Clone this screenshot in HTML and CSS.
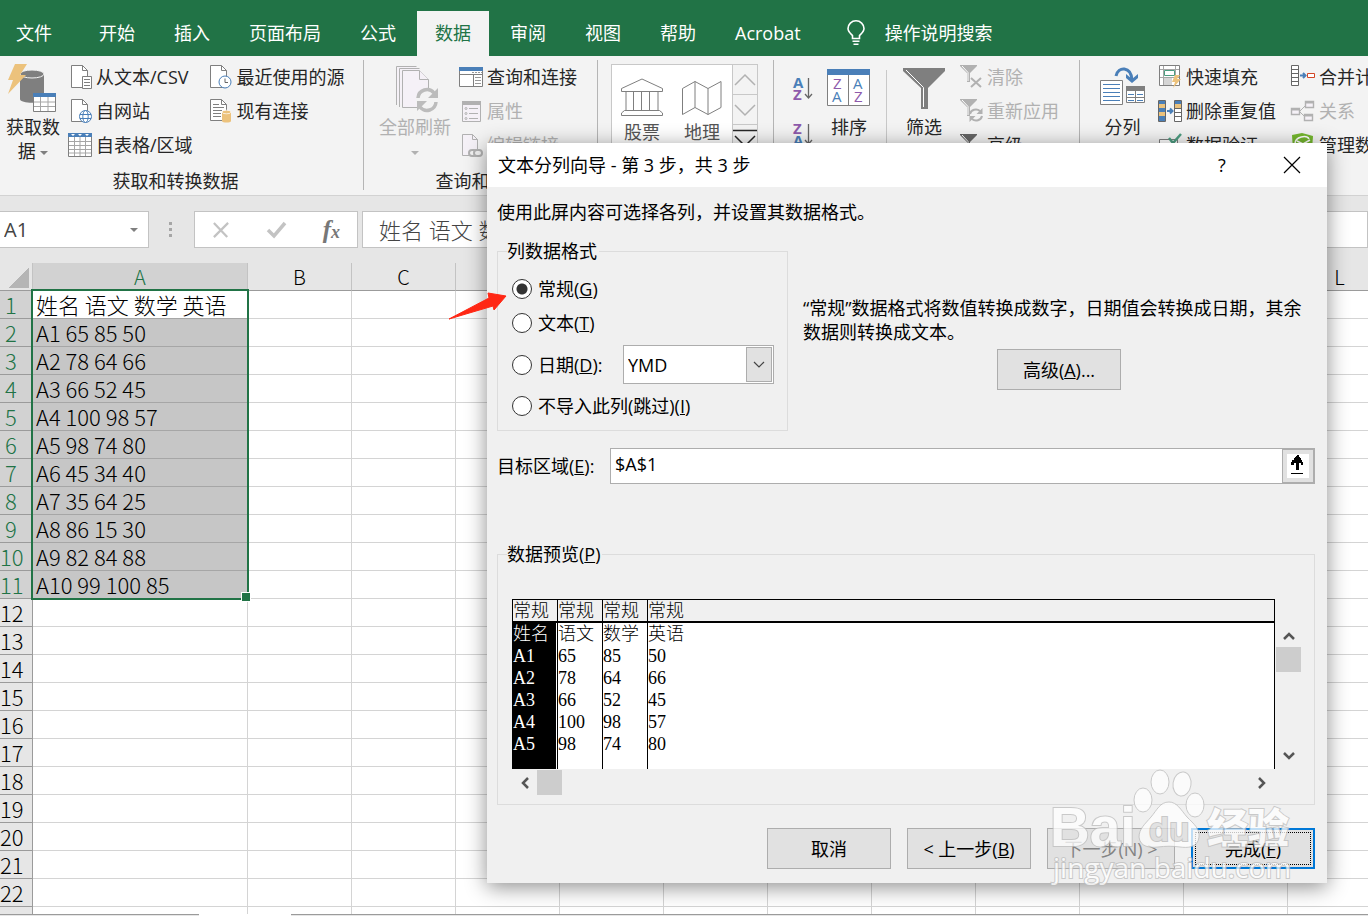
FILE: index.html
```html
<!DOCTYPE html>
<html lang="zh-CN">

<head>
    <meta charset="UTF-8">
    <meta name="viewport" content="width=device-width, initial-scale=1.0">
    <title>文本分列向导</title>
    <link rel="stylesheet" href="styles.css">
</head>

<body>
    <nav class="tabs">
        <a class="tab tab-file" href="#">文件</a>
        <a class="tab" href="#">开始</a>
        <a class="tab" href="#">插入</a>
        <a class="tab" href="#">页面布局</a>
        <a class="tab" href="#">公式</a>
        <a class="tab tab-active" href="#">数据</a>
        <a class="tab" href="#">审阅</a>
        <a class="tab" href="#">视图</a>
        <a class="tab" href="#">帮助</a>
        <a class="tab" href="#">Acrobat</a>
        <a class="tab tab-search" href="#">
            <svg width="18" height="26" viewBox="0 0 18 26" fill="none" stroke="#fff" stroke-width="1.6">
                <path d="M5.5 18.5v-3C3 13 1 11.500 1 8.500a8 7.700 0 0 1 16 0c0 3-2 4.500-4.500 7v3z" />
                <path d="M5.500 21.200h7M6.500 24.200h5" />
            </svg>
            操作说明搜索
        </a>
    </nav>

    <div class="ribbon">
        <section class="group group-get">
            <div class="group-body">
                <button class="big big-get">
                    <svg width="50" height="50" viewBox="0 0 50 50">
                        <path d="M12 10v25c0 5 24 5 24 0V10z" fill="#7f7f7f" />
                        <ellipse cx="24" cy="10" rx="12" ry="4" fill="#7f7f7f" stroke="#f3f3f3" />
                        <path d="M7 0h12l-7 11h6L0 30l5-14H0z" fill="#ecc27c" />
                        <path d="M25.500 29.500h22v18h-22z" fill="#fff" stroke="#7f7f7f" />
                        <path d="M25 29h23v4H25z" fill="#4a7fb8" />
                        <path d="M26 38h21M26 42.500h21M32.500 33v14M40 33v14" stroke="#a6a6a6" />
                    </svg>
                    <span>获取数<br>据 <i class="caret"></i></span>
                </button>
                <div class="column">
                    <button class="small">
                        <svg class="icon" viewBox="0 0 24 24">
                            <path d="M3.500.500h11l5 5v17h-16z" fill="#fff" stroke="#7f7f7f" />
                            <path d="M14.500.500v5h5" fill="none" stroke="#7f7f7f" />
                            <path d="M14.500 11.500h9v12h-9z" fill="#fff" stroke="#7f7f7f" />
                            <path d="M16 14.500h6M16 17.500h6M16 20.500h6" stroke="#7f7f7f" />
                        </svg>从文本/CSV
                    </button>
                    <button class="small">
                        <svg class="icon" viewBox="0 0 24 24">
                            <path d="M3.500.500h11l5 5v17h-16z" fill="#fff" stroke="#7f7f7f" />
                            <path d="M14.500.500v5h5" fill="none" stroke="#7f7f7f" />
                            <g fill="#fff" stroke="#4a7fb8">
                                <circle cx="17.500" cy="17.500" r="6" />
                                <ellipse cx="17.500" cy="17.500" rx="2.700" ry="6" />
                                <path d="M12 15.500h11M12 19.500h11" />
                            </g>
                        </svg>自网站
                    </button>
                    <button class="small">
                        <svg class="icon" viewBox="0 0 24 24">
                            <path d="M.500.500h23v23H.500z" fill="#fff" stroke="#7f7f7f" />
                            <path d="M0 0h24v4H0z" fill="#4a7fb8" />
                            <path d="M1 8.500h22M1 12.500h22M1 16.500h22M1 20h22M6.500 4v19M12 4v19M17.500 4v19" stroke="#a6a6a6" />
                            <path d="M3 1h4L5 3zM10 1h4l-2 2zM17 1h4l-2 2z" fill="#fff" />
                        </svg>自表格/区域
                    </button>
                </div>
                <div class="column">
                    <button class="small">
                        <svg class="icon" viewBox="0 0 24 24">
                            <path d="M1.500.500h11l5 5v17h-16z" fill="#fff" stroke="#7f7f7f" />
                            <path d="M12.500.500v5h5" fill="none" stroke="#7f7f7f" />
                            <circle cx="16" cy="17" r="6" fill="#fff" stroke="#4a7fb8" />
                            <path d="M16 13.500V17.500h3" fill="none" stroke="#666" />
                        </svg>最近使用的源
                    </button>
                    <button class="small">
                        <svg class="icon" viewBox="0 0 24 24">
                            <path d="M1.500.500h11l5 5v16h-16z" fill="#fff" stroke="#7f7f7f" />
                            <path d="M12.500.500v5h5M4 5.500h6M4 8.500h11M4 11.500h9M4 14.500h8M4 17.500h8" fill="none" stroke="#7f7f7f" />
                            <path d="M13 13v9c0 2 9 2 9 0v-9z" fill="#ecc27c" />
                            <ellipse cx="17.500" cy="13" rx="4.500" ry="1.800" fill="#ecc27c" stroke="#fff" stroke-width=".7" />
                        </svg>现有连接
                    </button>
                </div>
            </div>
            <div class="group-label">获取和转换数据</div>
        </section>

        <section class="group group-query">
            <div class="group-body">
                <button class="big big-refresh" disabled>
                    <svg width="46" height="50" viewBox="0 0 46 50">
                        <g fill="#f5f1f7" stroke="#b1b1b1">
                            <path d="M4.500 41V2.500h20M7.500 43V4.500h20" />
                            <path d="M10.500 6.500h17l9 9v28h-26z" />
                            <path d="M27.500 6.500v9h9" />
                        </g>
                        <circle cx="35" cy="36" r="11" fill="#f3f3f3" />
                        <path d="M26 34a9 9 0 0 1 16-5M44 38a9 9 0 0 1-16 5" fill="none" stroke="#bcbcbc" stroke-width="3.500" />
                        <path d="M46 24v10H36zM25 47V37h10z" fill="#bcbcbc" />
                    </svg>
                    <span>全部刷新<br><i class="caret"></i></span>
                </button>
                <div class="column">
                    <button class="small">
                        <svg class="icon" viewBox="0 0 24 24">
                            <path d="M.500 2.500h23v19H.500z" fill="#fff" stroke="#7f7f7f" />
                            <path d="M0 2h24v4H0z" fill="#4a7fb8" />
                            <path d="M1 9.500h22M14.500 9v12" stroke="#7f7f7f" />
                            <path d="M16 12.500h6M16 15.500h6M16 18.500h6" stroke="#999" />
                            <path d="M13 7.500h10" stroke="#999" stroke-dasharray="2 1" />
                        </svg>查询和连接
                    </button>
                    <button class="small" disabled>
                        <svg class="icon" viewBox="0 0 24 24">
                            <path d="M3.500 2.500h18v20h-18z" fill="#f5f1f7" stroke="#b1b1b1" />
                            <path d="M3 2h19v4H3z" fill="#b1b1b1" />
                            <path d="M10 9.500h9M10 14.500h9M10 19.500h9" stroke="#b1b1b1" />
                            <g fill="none" stroke="#b1b1b1"><circle cx="7" cy="9.500" r="1" /><circle cx="7" cy="14.500" r="1" /><circle cx="7" cy="19.500" r="1" /></g>
                        </svg>属性
                    </button>
                    <button class="small" disabled>
                        <svg class="icon" viewBox="0 0 24 24">
                            <path d="M3.500 1.500h10l5 5v16h-15z" fill="#f5f1f7" stroke="#b1b1b1" />
                            <path d="M13.500 1.500v5h5" fill="none" stroke="#b1b1b1" />
                            <g fill="#f3f3f3" stroke="#b1b1b1" stroke-width="2"><rect x="10" y="17" width="8" height="6" rx="3" /><rect x="15" y="17" width="8" height="6" rx="3" /></g>
                        </svg>编辑链接
                    </button>
                </div>
            </div>
            <div class="group-label">查询和连接</div>
        </section>

        <section class="group group-types">
            <div class="gallery">
                <button class="gallery-item">
                    <svg width="42" height="38" viewBox="0 0 42 38" fill="none" stroke="#7f7f7f">
                        <path d="M.500 10.500 21 1l20.500 9.500v3H.500zM5 14v18M12.500 14v18M20.500 14v18M28.500 14v18M37 14v18M3.500 32.500h35l3 2.500v2.500H.500V35z" />
                    </svg>股票
                </button>
                <button class="gallery-item">
                    <svg width="42" height="38" viewBox="0 0 42 38" fill="none" stroke="#7f7f7f">
                        <path d="M1.500 10.500 14 3.500l13 7 13-7v26l-13 7-13-7-12.500 7zM14 3.500v26M27 10.500v26" />
                    </svg>地理
                </button>
                <div class="gallery-scroll">
                    <button aria-label="上一行"><svg width="22" height="12" viewBox="0 0 22 12"><path d="M1 11 11 1l10 10" /></svg></button>
                    <button aria-label="下一行"><svg width="22" height="12" viewBox="0 0 22 12"><path d="m1 1 10 10L21 1" /></svg></button>
                    <button class="more" aria-label="其他"><svg width="24" height="18" viewBox="0 0 24 18"><path d="M0 1.500h24M2 7l10 10L22 7" /></svg></button>
                </div>
            </div>
        </section>

        <section class="group group-sort">
            <div class="sort-pair">
                <button aria-label="升序">
                    <svg width="20" height="26" viewBox="0 0 20 26">
                        <text class="az az-blue" x="0" y="12">A</text><text class="az az-purple" x="0" y="24">Z</text>
                        <path d="M15.500 2v19M12 18l3.500 4 3.500-4" fill="none" stroke="#666" stroke-width="1.300" />
                    </svg>
                </button>
                <button aria-label="降序">
                    <svg width="20" height="26" viewBox="0 0 20 26">
                        <text class="az az-purple" x="0" y="12">Z</text><text class="az az-blue" x="0" y="24">A</text>
                        <path d="M15.500 2v19M12 18l3.500 4 3.500-4" fill="none" stroke="#666" stroke-width="1.300" />
                    </svg>
                </button>
            </div>
            <button class="big big-sort">
                <svg width="44" height="50" viewBox="0 0 44 50">
                    <path d="M.500 5.500h42v36H.500z" fill="#fff" stroke="#7f7f7f" />
                    <path d="M0 5h43v6H0z" fill="#4a7fb8" />
                    <path d="M21.500 11v30" stroke="#7f7f7f" />
                    <text class="zz az-purple" x="6" y="25">Z</text><text class="zz az-blue" x="5" y="38">A</text>
                    <text class="zz az-blue" x="26" y="25">A</text><text class="zz az-purple" x="27" y="38">Z</text>
                </svg>
                <span>排序</span>
            </button>
            <div class="divider"></div>
            <button class="big big-filter">
                <svg width="42" height="50" viewBox="0 0 42 50">
                    <path d="M0 4h42v3L25 24v21h-7V24L0 7z" fill="#7f7f7f" />
                    <path d="m3 6 17.500 17.500V43" fill="none" stroke="#fff" />
                </svg>
                <span>筛选</span>
            </button>
            <div class="column">
                <button class="small" disabled>
                    <svg class="icon" viewBox="0 0 24 24">
                        <path d="M1 0h17v1l-7 7v9H8V8L1 1z" fill="#b1b1b1" /><path d="m3 1 6 6.500V16" fill="none" stroke="#fff" />
                        <path d="m12 13 10 9M22 13l-10 9" stroke="#b1b1b1" stroke-width="2" />
                    </svg>清除
                </button>
                <button class="small" disabled>
                    <svg class="icon" viewBox="0 0 24 24">
                        <path d="M1 0h17v1l-7 7v9H8V8L1 1z" fill="#b1b1b1" /><path d="m3 1 6 6.500V16" fill="none" stroke="#fff" />
                        <path d="M11 15a6 5.500 0 0 1 10-3M23 17a6 5.500 0 0 1-10 3" fill="none" stroke="#b1b1b1" stroke-width="2" />
                        <path d="M23.500 9v6h-6zM10.500 23v-6h6z" fill="#b1b1b1" />
                    </svg>重新应用
                </button>
                <button class="small">
                    <svg class="icon" viewBox="0 0 24 24">
                        <path d="M1 1h17v1l-7 7v9H8V9L1 2z" fill="#666" /><path d="m3 2 6 6.500V17" fill="none" stroke="#fff" />
                    </svg>高级
                </button>
            </div>
        </section>

        <section class="group group-tools">
            <button class="big big-split">
                <svg width="46" height="50" viewBox="0 0 46 50">
                    <path d="M.500 16.500h22v24H.500z" fill="#fff" stroke="#7f7f7f" />
                    <path d="M3 20.500h17M3 24.500h17M3 28.500h17M3 32.500h17M3 36.500h17" stroke="#4a7fb8" />
                    <path d="M26.500 22.500h18v16h-18z" fill="#fff" stroke="#7f7f7f" />
                    <path d="M26 22h19v5H26z" fill="#7f7f7f" />
                    <path d="M35.500 27v11M27 33.500h18" stroke="#7f7f7f" />
                    <path d="M28 30.500h6M37 30.500h6M28 36.500h6M37 36.500h6" stroke="#4a7fb8" />
                    <path d="M16 12c2-10 15-10 16 4" fill="none" stroke="#4a7fb8" stroke-width="3" />
                    <path d="M26 10v4l6 5 6-5v-4l-6 5z" fill="#4a7fb8" />
                </svg>
                <span>分列</span>
            </button>
            <div class="column column-tools">
                <button class="small">
                    <svg class="icon" viewBox="0 0 24 24">
                        <path d="M1.500.500h20v20h-20z" fill="#fff" stroke="#7f7f7f" />
                        <path d="M2 4.500h19M2 12.500h19M5.500 1v19M17.500 1v19" stroke="#a6a6a6" />
                        <path d="M6.500 5.500h10v5h-10z" fill="#fff" stroke="#4d9c80" />
                        <path d="M6 13h8v7H6z" fill="#d5d5d5" />
                        <path d="M17 10h5l-3 4h4l-8 9 2-6h-3z" fill="#ecc27c" />
                    </svg>快速填充
                </button>
                <button class="small">
                    <svg class="icon" viewBox="0 0 24 24">
                        <path d="M.500 1.500h7v21h-7zM16.500 1.500h7v21h-7z" fill="#fff" stroke="#666" />
                        <path d="M1 2h6v3H1zM1 9h6v4H1zM1 17h6v5H1zM17 2h6v3h-6z" fill="#4a7fb8" />
                        <path d="M1 5h6v4H1zM1 13h6v4H1zM17 5h6v4h-6z" fill="#ecc27c" />
                        <path d="M17 9.500h6M17 13.500h6M17 17.500h6" stroke="#666" />
                        <path d="M9 12h5M12 9.500l2.500 2.500-2.500 2.500" fill="none" stroke="#4a7fb8" stroke-width="2" />
                    </svg>删除重复值
                </button>
                <button class="small">
                    <svg class="icon" viewBox="0 0 24 24">
                        <path d="M1.500 6.500h18v6h-18z" fill="#fff" stroke="#7f7f7f" />
                        <path d="m11 5 4 5 8-9" fill="none" stroke="#4d9c80" stroke-width="2.500" />
                    </svg>数据验证
                </button>
            </div>
            <div class="column">
                <button class="small">
                    <svg class="icon" viewBox="0 0 24 24">
                        <path d="M.500.500h7v20h-7z" fill="#fff" stroke="#666" />
                        <path d="M1 4.500h6M1 8.500h6M1 12.500h6M1 16.500h6" stroke="#666" />
                        <path d="M9 10.500h5M12 8l2.500 2.500L12 13" fill="none" stroke="#4a7fb8" stroke-width="2" />
                        <path d="M16.500 8.500h7v4h-7z" fill="#fff" stroke="#d24726" />
                    </svg>合并计算
                </button>
                <button class="small" disabled>
                    <svg class="icon" viewBox="0 0 24 24">
                        <path d="M9 12 15 6M9 13l5 5" stroke="#b1b1b1" />
                        <path d="M.500 9.500h8v6h-8zM14.500 2.500h8v6h-8zM13.500 15.500h8v6h-8z" fill="#f5f1f7" stroke="#b1b1b1" stroke-width="1.400" />
                        <path d="M1 10.500h7M15 3.500h7M14 16.500h7" stroke="#b1b1b1" stroke-width="2" />
                    </svg>关系
                </button>
                <button class="small">
                    <svg class="icon" viewBox="0 0 24 24">
                        <path d="M1 2 11 0l11 3-1 14-9 5-10-5z" fill="#74b72e" />
                        <path d="M4 11c0-8 12-9 14-5M6 8l6 3 7-4M12 11v8" fill="none" stroke="#fff" stroke-width="1.500" />
                    </svg>管理数据模型
                </button>
            </div>
        </section>
    </div>

    <div class="formula-bar">
        <div class="name-box">
            <input type="text" value="A1" aria-label="名称框">
            <i class="caret"></i>
        </div>
        <div class="dots"><i></i><i></i><i></i></div>
        <div class="formula-buttons">
            <button aria-label="取消"><svg width="18" height="16" viewBox="0 0 20 18" stroke="#c3c3c3" stroke-width="2.500"><path d="m2 1 15 16M18 1 2 17" /></svg></button>
            <button aria-label="输入"><svg width="20" height="18" viewBox="0 0 20 18" fill="none" stroke="#c3c3c3" stroke-width="3.500"><path d="m2 9 6 6L19 2" /></svg></button>
            <button class="fx" aria-label="插入函数">f<small>x</small></button>
        </div>
        <input class="formula" type="text" value="姓名 语文 数学 英语" aria-label="编辑栏">
    </div>

    <main class="sheet">
        <table class="grid">
            <thead><tr id="columns"></tr></thead>
            <tbody id="rows"></tbody>
        </table>
        <div class="selection"></div>
    </main>
    <footer class="sheet-tabs"><span class="sheet-tab"></span></footer>

    <div class="dialog" role="dialog" aria-labelledby="dialog-title">
        <div class="dialog-title">
            <span id="dialog-title">文本分列向导 - 第 3 步，共 3 步</span>
            <button aria-label="帮助">?</button>
            <button aria-label="关闭"><svg width="16" height="16" viewBox="0 0 16 16" stroke="#000" stroke-width="1.200"><path d="m0 0 16 16M16 0 0 16" /></svg></button>
        </div>
        <form class="dialog-body">
            <p class="intro">使用此屏内容可选择各列，并设置其数据格式。</p>

            <div class="format-row">
                <fieldset class="format">
                    <legend>列数据格式</legend>
                    <label class="choice"><input type="radio" name="format" checked>常规(<u>G</u>)</label>
                    <label class="choice"><input type="radio" name="format">文本(<u>T</u>)</label>
                    <div class="choice-date">
                        <label class="choice"><input type="radio" name="format">日期(<u>D</u>):</label>
                        <div class="select">
                            <select aria-label="日期格式"><option>YMD</option></select>
                            <span class="select-arrow"><svg width="12" height="7" viewBox="0 0 12 7" fill="none" stroke="#444" stroke-width="1.200"><path d="m1 1 5 5 5-5" /></svg></span>
                        </div>
                    </div>
                    <label class="choice"><input type="radio" name="format">不导入此列(跳过)(<u>I</u>)</label>
                </fieldset>
                <div class="hint">
                    <p>“常规”数据格式将数值转换成数字，日期值会转换成日期，其余数据则转换成文本。</p>
                    <button type="button" class="btn">高级(<u>A</u>)...</button>
                </div>
            </div>

            <div class="target">
                <label for="target">目标区域(<u>E</u>):</label>
                <input type="text" id="target" value="$A$1">
                <button type="button" aria-label="选择区域">
                    <svg width="22" height="24" viewBox="0 0 22 24"><path d="M0 0h22v24H0z" fill="#fff" /><path d="M11 1h-1v1H9v1H8v1H7v2H5v2H4v3h3V9h2v7h3V9h2v2h2V8h-1V6h-1V4h-1V3h-1V1zM4 19h12v1H4z" /></svg>
                </button>
            </div>

            <fieldset class="preview">
                <legend>数据预览(<u>P</u>)</legend>
                <div class="preview-area">
                    <div class="preview-box">
                        <table class="preview-table">
                            <thead>
                                <tr><th>常规</th><th>常规</th><th>常规</th><th>常规</th></tr>
                            </thead>
                            <tbody>
                                <tr><td>姓名</td><td>语文</td><td>数学</td><td>英语</td></tr>
                                <tr><td>A1</td><td>65</td><td>85</td><td>50</td></tr>
                                <tr><td>A2</td><td>78</td><td>64</td><td>66</td></tr>
                                <tr><td>A3</td><td>66</td><td>52</td><td>45</td></tr>
                                <tr><td>A4</td><td>100</td><td>98</td><td>57</td></tr>
                                <tr><td>A5</td><td>98</td><td>74</td><td>80</td></tr>
                                <tr><td></td><td></td><td></td><td></td></tr>
                            </tbody>
                        </table>
                    </div>
                    <div class="scroll scroll-v">
                        <svg width="12" height="10" viewBox="0 0 12 10"><path d="m1 8 5-5 5 5" /></svg>
                        <span class="thumb"></span>
                        <svg class="scroll-end" width="12" height="10" viewBox="0 0 12 10"><path d="m1 2 5 5 5-5" /></svg>
                    </div>
                    <div class="scroll scroll-h">
                        <svg width="10" height="12" viewBox="0 0 10 12"><path d="M8 1 3 6l5 5" /></svg>
                        <span class="thumb"></span>
                        <svg class="scroll-end" width="10" height="12" viewBox="0 0 10 12"><path d="m2 1 5 5-5 5" /></svg>
                    </div>
                </div>
            </fieldset>

            <div class="actions">
                <button type="button" class="btn">取消</button>
                <button type="button" class="btn">&lt; 上一步(<u>B</u>)</button>
                <button type="button" class="btn btn-next" disabled>下一步(N) &gt;</button>
                <button type="button" class="btn btn-finish"><span>完成(<u>F</u>)</span></button>
            </div>
        </form>
    </div>

    <svg class="arrow" width="60" height="34" viewBox="0 0 60 34"><path d="M1 30 41 9l-1-5 18 3-12 14-1-4z" fill="#ff2714" stroke="#ff2714" stroke-linejoin="round" /></svg>

    <svg class="watermark" width="250" height="124" viewBox="0 0 250 124">
        <g class="paw">
            <ellipse cx="93" cy="33" rx="9" ry="12" />
            <ellipse cx="110" cy="15" rx="9" ry="12" />
            <ellipse cx="132" cy="17" rx="9" ry="12" transform="rotate(8 132 17)" />
            <ellipse cx="145" cy="38" rx="9" ry="12" />
            <path d="M119 35c8 0 12 8 18 15 7 7 13 12 12 20-1 11-12 11-19 10-8-1-14-1-22 0-8 1-18 0-19-10 0-8 6-13 12-20 6-7 9-15 18-15z" />
        </g>
        <text class="wm-bai" x="0" y="79">Bai</text>
        <text class="wm-du" x="99" y="74">du</text>
        <text class="wm-cn" x="157" y="76">经验</text>
        <text class="wm-url" x="3" y="111">jingyan.baidu.com</text>
    </svg>

    <script>
        const columns = ['A', 'B', 'C', 'D', 'E', 'F', 'G', 'H', 'I', 'J', 'K', 'L'];
        const data = [
            '姓名 语文 数学 英语', 'A1 65 85 50', 'A2 78 64 66', 'A3 66 52 45', 'A4 100 98 57', 'A5 98 74 80',
            'A6 45 34 40', 'A7 35 64 25', 'A8 86 15 30', 'A9 82 84 88', 'A10 99 100 85'
        ];

        document.querySelector('#columns').innerHTML = '<th class="corner"></th>' +
            columns.map((c) => `<th class="${c === 'A' ? 'col-a' : ''}">${c}</th>`).join('');

        let html = '';
        for (let i = 0; i < 23; i++) {
            html += `<tr class="${i < data.length ? 'selected' : ''}"><th>${i + 1}</th>`;
            html += columns.map((c, j) => `<td>${j === 0 && data[i] ? data[i] : ''}</td>`).join('') + '</tr>';
        }
        document.querySelector('#rows').innerHTML = html;
    </script>
</body>

</html>
```
FILE: styles.css
```css
* {
    box-sizing: border-box;
}

body {
    display: flex;
    flex-direction: column;
    height: 100vh;
    margin: 0;
    overflow: hidden;
    background-color: #e6e6e6;
    color: #262626;
    font: 18px/24px "Open Sans", "Noto Sans CJK SC", sans-serif;
}

button,
input,
select {
    margin: 0;
    padding: 0;
    border: 0;
    background: none;
    color: inherit;
    font: inherit;
}

svg {
    display: block;
    flex: none;
    overflow: visible;
}

/* tabs */
.tabs {
    display: flex;
    flex: none;
    gap: 3px;
    height: 56px;
    padding-top: 11px;
    background-color: #217346;
    white-space: nowrap;
}

.tab {
    display: flex;
    align-items: center;
    padding: 0 18px 2px;
    color: #fff;
    text-decoration: none;
}

.tab-file {
    padding: 0 26px 2px 16px;
}

.tab-active {
    background-color: #f3f3f3;
    color: #217346;
}

.tab-search {
    gap: 20px;
    padding-left: 25px;
}

/* ribbon */
.ribbon {
    display: flex;
    flex: none;
    height: 140px;
    padding: 4px 0 5px;
    overflow: hidden;
    background-color: #f3f3f3;
    border-bottom: 1px solid #d2d2d2;
    white-space: nowrap;
}

.group {
    flex: none;
    border-right: 1px solid #b5b5b5;
}

.group-get {
    width: 364px;
}

.group-query {
    width: 234px;
}

.group-types {
    width: 176px;
    padding: 4px 0 0 13px;
}

.group-sort,
.group-tools {
    display: flex;
}

.group-sort {
    width: 306px;
}

.group-tools {
    border-right: 0;
}

.group-body {
    display: flex;
    height: 109px;
}

.group-label {
    margin-right: 12px;
    text-align: center;
}

.group-query .group-label {
    margin-right: 0;
}

.column {
    display: flex;
    flex-direction: column;
}

.column + .column {
    margin-left: 16px;
}

.small {
    display: flex;
    align-items: center;
    gap: 4px;
    height: 34px;
}

.icon {
    width: 24px;
    height: 24px;
}

.big {
    display: flex;
    flex: none;
    flex-direction: column;
    align-items: center;
    gap: 1px;
    width: 64px;
    height: 108px;
    padding-top: 4px;
}

.big > span {
    line-height: 24px;
}

button:disabled {
    color: #b1b1b1;
}

.big-get {
    margin: 0 3px 0 1px;
}

.big-refresh {
    width: 82px;
    margin: 0 3px 0 10px;
}

.caret {
    display: inline-block;
    border: 4px solid transparent;
    border-top-color: #7f7f7f;
    border-bottom: 0;
    vertical-align: middle;
}

.big-refresh .caret {
    border-top-color: #b1b1b1;
}

.gallery {
    display: flex;
    width: 147px;
    height: 110px;
    background-color: #fff;
    border: 1px solid #c8c8c8;
    color: #555;
}

.gallery-item {
    display: flex;
    flex: 1;
    flex-direction: column;
    align-items: center;
    gap: 4px;
    padding-top: 13px;
}

.gallery-scroll {
    display: flex;
    flex-direction: column;
    width: 25px;
    background-color: #f3f3f3;
    border-left: 1px solid #c8c8c8;
}

.gallery-scroll button {
    display: flex;
    align-items: center;
    justify-content: center;
    height: 30px;
    border-bottom: 1px solid #c8c8c8;
}

.gallery-scroll .more {
    align-items: flex-start;
    padding-top: 4px;
}

.gallery-scroll path {
    fill: none;
    stroke: #b1b1b1;
    stroke-width: 1.5;
}

.gallery-scroll .more path {
    stroke: #262626;
}

.sort-pair {
    display: flex;
    flex-direction: column;
    gap: 20px;
    width: 42px;
    padding: 16px 0 0 19px;
}

.az {
    font: bold 15px "Open Sans", sans-serif;
}

.zz {
    font: 15px "Open Sans", sans-serif;
}

.az-blue {
    fill: #4a7fb8;
}

.az-purple {
    fill: #8e5aab;
}

.big-sort {
    margin-left: 1px;
}

.divider {
    width: 1px;
    margin: 10px 5px 0;
    background-color: #c8c8c8;
}

.big-filter {
    margin-right: 3px;
}

.big-split {
    width: 78px;
    padding-left: 7px;
}

.column-tools {
    width: 117px;
}

/* formula bar */
.formula-bar {
    display: flex;
    flex: none;
    height: 67px;
    padding: 15px 0;
}

.name-box,
.formula-buttons,
.formula {
    display: flex;
    align-items: center;
    background-color: #fff;
    border: 1px solid #c3c3c3;
    color: #444;
}

.name-box {
    width: 149px;
    padding: 0 10px 0 4px;
    border-left: 0;
    font-size: 20px;
}

.name-box input {
    flex: 1;
    min-width: 0;
}

.dots {
    display: flex;
    flex-direction: column;
    align-items: center;
    justify-content: center;
    gap: 3px;
    width: 43px;
    margin-right: 2px;
}

.dots i {
    width: 3px;
    height: 3px;
    background-color: #a6a6a6;
}

.formula-buttons {
    justify-content: space-between;
    width: 164px;
    margin-right: 4px;
    padding: 0 17px;
}

.fx {
    color: #777;
    font: italic bold 25px "Liberation Serif", serif;
}

.fx small {
    font-size: 18px;
}

.formula {
    flex: 1;
    min-width: 0;
    padding-left: 16px;
    font-size: 22px;
    font-weight: 300;
}

/* grid */
.sheet {
    position: relative;
    flex: 1;
    min-height: 0;
    overflow: hidden;
    background-color: #fff;
    font: 300 22px/27px "Noto Sans CJK SC", sans-serif;
    color: #000;
}

.grid {
    width: 1392px;
    table-layout: fixed;
    border-spacing: 0;
}

.grid th,
.grid td {
    height: 28px;
    padding: 0;
    border-right: 1px solid #d4d4d4;
    border-bottom: 1px solid #d4d4d4;
    white-space: nowrap;
}

.grid th {
    background-color: #e6e6e6;
    border-color: #9b9b9b;
    font-weight: 300;
}

.grid thead th {
    border-right-color: #c3c3c3;
    font-size: 20px;
}

.grid .corner {
    width: 33px;
    background: linear-gradient(135deg, #e6e6e6 50%, #b5b5b5 50%) no-repeat 9px 5px / 20px 20px #e6e6e6;
}

.grid .col-a {
    width: 215px;
    background-color: #d2d2d2;
    color: #217346;
}

.grid tbody th {
    padding-right: 10px;
}

.grid tbody td:nth-child(2) {
    padding-left: 3px;
}

.selected th {
    background-color: #d2d2d2;
    color: #217346;
}

.selected td:nth-child(2) {
    background-color: #c6c6c6;
    border-bottom-color: #a6a6a6;
}

.selected:first-child td:nth-child(2) {
    background-color: #fff;
}

.selection {
    position: absolute;
    top: 26px;
    left: 31px;
    width: 218px;
    height: 311px;
    border: 2px solid #217346;
}

.selection::after {
    content: "";
    position: absolute;
    right: -4px;
    bottom: -4px;
    width: 8px;
    height: 8px;
    background-color: #217346;
    border: 1px solid #fff;
}

.sheet-tabs {
    flex: none;
    height: 2px;
    border-top: 1px solid #9b9b9b;
}

.sheet-tab {
    display: block;
    width: 92px;
    height: 2px;
    margin: -1px 0 0 199px;
    background-color: #fff;
}

/* dialog */
.dialog {
    position: absolute;
    top: 143px;
    left: 487px;
    width: 840px;
    background-color: #f0f0f0;
    box-shadow: 0 4px 20px rgba(0, 0, 0, 0.45);
    color: #000;
}

.dialog-title {
    display: flex;
    align-items: center;
    height: 44px;
    padding-left: 11px;
    background-color: #fff;
}

.dialog-title span {
    flex: 1;
}

.dialog-title button {
    display: flex;
    justify-content: center;
    width: 70px;
}

.dialog-body {
    padding: 13px 12px 14px 10px;
}

.intro {
    margin: 0 0 15px;
}

fieldset {
    min-width: 0;
    margin: 0;
    border: 1px solid #dcdcdc;
}

legend {
    padding: 0 2px 0 0;
}

.format-row {
    display: flex;
    gap: 15px;
}

.format {
    display: flex;
    flex: none;
    flex-direction: column;
    gap: 10px;
    width: 291px;
    padding: 14px 13px 12px 14px;
}

.format legend,
.preview legend {
    margin-left: -5px;
}

.choice {
    display: flex;
    align-items: center;
}

.choice input {
    appearance: none;
    width: 20px;
    height: 20px;
    margin-right: 6px;
    background-color: #fff;
    border: 1px solid #333;
    border-radius: 50%;
}

.choice input:checked {
    background: radial-gradient(circle, #333 5px, #fff 6px);
}

.choice-date {
    display: flex;
    justify-content: space-between;
}

.select {
    display: flex;
    width: 151px;
    height: 39px;
    padding: 1px;
    background-color: #fff;
    border: 1px solid #adadad;
}

.select select {
    appearance: none;
    flex: 1;
    padding-left: 3px;
}

.select-arrow {
    display: flex;
    align-items: center;
    justify-content: center;
    width: 26px;
    background-color: #e1e1e1;
    border: 1px solid #adadad;
}

.hint {
    display: flex;
    flex: 1;
    flex-direction: column;
    align-items: center;
    gap: 5px;
    padding-top: 57px;
}

.hint p {
    margin: 0;
}

.btn {
    width: 124px;
    height: 41px;
    background-color: #e1e1e1;
    border: 1px solid #adadad;
}

.target {
    display: flex;
    align-items: center;
    height: 36px;
    margin: 17px 0 58px;
}

.target label {
    width: 113px;
}

.target input {
    flex: 1;
    height: 36px;
    padding: 0 4px 4px;
    background-color: #fff;
    border: 1px solid #adadad;
}

.target button {
    display: flex;
    align-items: center;
    justify-content: center;
    width: 32px;
    height: 36px;
    background-color: #e1e1e1;
    border: 2px solid #adadad;
    border-left: 0;
}

.preview {
    padding: 33px 13px 9px 14px;
}

.preview-area {
    display: grid;
    grid-template-columns: 1fr 25px;
    gap: 1px;
}

.preview-box {
    height: 170px;
    overflow: hidden;
    background: linear-gradient(#f0f0f0 21px, #000 21px, #000 23px, #fff 23px);
    border: 1px solid #000;
    border-bottom: 0;
}

.preview-table {
    border-spacing: 0;
    font: 300 18px/22px "Liberation Serif", "Noto Sans CJK SC", serif;
}

.preview-table th,
.preview-table td {
    width: 45px;
    height: 22px;
    padding: 0;
    border-left: 1px solid #000;
    font-weight: 300;
    text-align: left;
}

.preview-table th {
    height: 23px;
    padding-top: 1px;
    line-height: 20px;
    border-bottom: 2px solid #000;
}

.preview-table td {
    padding-top: 1px;
    line-height: 21px;
}

.preview-table th:first-child,
.preview-table td:first-child {
    width: 44px;
    border-left: 0;
}

.preview-table td:first-child {
    background-color: #000;
    border-right: 1px solid #fff;
    color: #fff;
}

.scroll {
    display: flex;
    align-items: center;
}

.scroll path {
    fill: none;
    stroke: #555;
    stroke-width: 2.5;
}

.thumb {
    width: 25px;
    height: 25px;
    background-color: #cdcdcd;
}

.scroll-v {
    flex-direction: column;
    gap: 6px;
    padding: 32px 0 8px;
}

.scroll-h {
    gap: 7px;
    padding: 0 8px;
}

.scroll-v .scroll-end {
    margin-top: auto;
}

.scroll-h .scroll-end {
    margin-left: auto;
}

.actions {
    display: flex;
    justify-content: flex-end;
    gap: 16px;
    margin-top: 23px;
}

.btn-next {
    width: 128px;
}

.btn-next:disabled {
    color: #838383;
}

.btn-finish {
    padding: 2px;
    border: 2px solid #0078d7;
}

.btn-finish span {
    display: flex;
    align-items: center;
    justify-content: center;
    height: 33px;
    border: 1px dotted #000;
}

/* drawn over the dialog */
.arrow {
    position: absolute;
    top: 289px;
    left: 448px;
}

.watermark {
    position: absolute;
    top: 767px;
    left: 1050px;
    fill: #fff;
    stroke: #bdbdbd;
    opacity: 0.75;
    pointer-events: none;
}

.watermark text {
    paint-order: stroke;
    stroke-width: 2px;
}

.wm-bai {
    font: bold 55px "Liberation Sans", sans-serif;
}

.watermark .wm-du {
    fill: #dedede;
    font: bold 33px "Liberation Sans", sans-serif;
}

.wm-cn {
    font: 900 41px "Noto Sans CJK SC", sans-serif;
}

.wm-url {
    font: 28px "Open Sans", sans-serif;
}
```
